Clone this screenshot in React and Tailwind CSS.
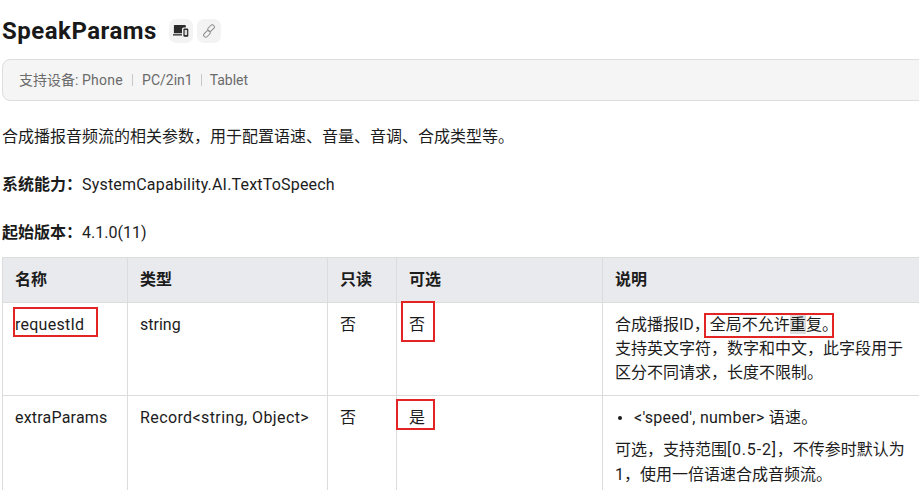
import React from "react";

function DeviceIcon() {
  return (
    <svg width="16" height="14" viewBox="0 0 16 14" fill="none">
      <path d="M1.5 1h10.5a.8.8 0 0 1 .8.8V3.5H10.6a1.6 1.6 0 0 0-1.6 1.6V9.2H.9V1.7c0-.4.2-.7.6-.7z" fill="#2a2a2a" />
      <rect x="0" y="10.2" width="9" height="1.3" fill="#2a2a2a" />
      <rect x="10.4" y="4.6" width="4.9" height="8.2" rx="1" fill="#2a2a2a" />
      <rect x="11.6" y="6" width="2.5" height="5" fill="#dcdcdc" />
    </svg>
  );
}

function LinkIcon() {
  return (
    <svg width="14" height="14" viewBox="0 0 14 14" fill="none" stroke="#8a8a8a" strokeWidth="1">
      <rect x="7" y="0.4" width="4.2" height="7.4" rx="2.1" transform="rotate(45 9.1 4.1)" />
      <rect x="2.8" y="6.2" width="4.2" height="7.4" rx="2.1" transform="rotate(45 4.9 9.9)" />
    </svg>
  );
}

function RedBox({ className }) {
  return <span className={"absolute border-2 border-[#e32424] pointer-events-none " + className} />;
}

const cell = "border border-[#dcdcdc] px-[12px] pt-[10px]";

export default function App() {
  return (
    <div className="w-[919px] h-[490px] overflow-hidden bg-white text-[16px] leading-[24px] text-[#1c1c1c] font-['Roboto','Noto_Sans_CJK_SC',sans-serif]">
      <div className="w-[960px] pl-[2px] pt-[15px]">
        <div className="flex items-center h-[32px]">
          <h1 className="text-[24px] leading-[32px] font-bold text-[#191919] tracking-[0.5px]">SpeakParams</h1>
          <span className="ml-[12px] w-[24px] h-[24px] rounded-[7px] bg-[#f3f3f3] flex items-center justify-center">
            <DeviceIcon />
          </span>
          <span className="ml-[4px] w-[24px] h-[24px] rounded-[7px] bg-[#f3f3f3] flex items-center justify-center">
            <LinkIcon />
          </span>
        </div>
        <div className="mt-[12px] h-[42px] rounded-[8px] border border-[#dedede] bg-[#f5f5f5] pl-[16px] flex items-center text-[14px] text-[#6b6b6b]">
          <span>支持设备: <span className="tracking-[0.3px]">Phone</span></span>
          <span className="mx-[9px] w-px h-[12px] bg-[#c8c8c8]" />
          <span>PC/2in1</span>
          <span className="mx-[8px] w-px h-[12px] bg-[#c8c8c8]" />
          <span>Tablet</span>
        </div>
        <p className="mt-[24px]">合成播报音频流的相关参数，用于配置语速、音量、音调、合成类型等。</p>
        <p className="mt-[24px]"><b className="font-bold">系统能力：</b><span className="tracking-[0.19px]">SystemCapability.AI.TextToSpeech</span></p>
        <p className="mt-[24px]"><b className="font-bold">起始版本：</b>4.1.0(11)</p>
        <table className="mt-[12px] table-fixed border-collapse w-[958px]">
          <colgroup>
            <col className="w-[125px]" />
            <col className="w-[200px]" />
            <col className="w-[69px]" />
            <col className="w-[206px]" />
            <col className="w-[358px]" />
          </colgroup>
          <thead>
            <tr className="h-[45px] bg-[#e9eaed]">
              {["名称", "类型", "只读", "可选", "说明"].map((h) => (
                <th key={h} className="border border-[#dcdcdc] px-[12px] text-left align-middle font-bold">{h}</th>
              ))}
            </tr>
          </thead>
          <tbody>
            <tr className="h-[93px] align-top">
              <td className={"relative " + cell}>
                <span className="tracking-[0.25px]">requestId</span>
                <RedBox className="left-[10px] top-[4px] w-[85px] h-[30px]" />
              </td>
              <td className={cell}>string</td>
              <td className={cell}>否</td>
              <td className={"relative " + cell}>
                否
                <RedBox className="left-[4px] top-[-2px] w-[34px] h-[41px]" />
              </td>
              <td className={cell + " pb-[10px]"}>
                <div className="w-[292px]">
                  <div className="relative">
                    合成播报ID，全局不允许<span className="bg-[#dcdcdc]">重</span>复。
                    <RedBox className="left-[89px] top-[0px] w-[130px] h-[25px]" />
                  </div>
                  <div>支持英文字符，数字和中文，此字段用于</div>
                  <div>区分不同请求，长度不限制。</div>
                </div>
              </td>
            </tr>
            <tr className="align-top">
              <td className={cell}><span className="tracking-[0.2px]">extraParams</span></td>
              <td className={cell}><span className="tracking-[0.4px]">Record&lt;string, Object&gt;</span></td>
              <td className={cell}>否</td>
              <td className={"relative " + cell}>
                是
                <RedBox className="left-[-1px] top-[3px] w-[39px] h-[31px]" />
              </td>
              <td className={cell}>
                <div className="w-[300px]">
                  <div className="flex items-center">
                    <span className="ml-[3px] mr-[12px] w-[4px] h-[4px] rounded-full bg-[#1c1c1c]" />
                    <span className="tracking-[0.25px]">&lt;'speed', number&gt; 语速。</span>
                  </div>
                  <div className="mt-[8px]">可选，支持范围<span className="tracking-[0.8px]">[0.5-2]</span>，不传参时默认为</div>
                  <div className="mt-[1px]">1，使用一倍语速合成音频流。</div>
                  <div className="flex items-center mt-[7px]">
                    <span className="ml-[3px] mr-[12px] w-[4px] h-[4px] rounded-full bg-[#1c1c1c]" />
                    <span className="tracking-[0.25px]">&lt;'volume', number&gt; 音量。</span>
                  </div>
                </div>
              </td>
            </tr>
          </tbody>
        </table>
      </div>
    </div>
  );
}
